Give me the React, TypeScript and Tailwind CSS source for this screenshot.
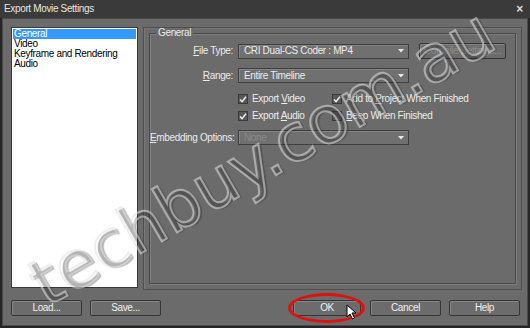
import React from 'react'

function Dropdown({ value, disabled }: { value: string; disabled?: boolean }) {
  return (
    <div className="flex h-[15px] w-[171px] items-center justify-between border border-[#3e3e3e] bg-[#707070] pl-[5px] pr-[4px] shadow-[inset_1px_1px_0_#858585]">
      <span className={disabled ? 'text-[#8a8a8a]' : 'text-[#ececec]'}>{value}</span>
      <svg width="6" height="4" viewBox="0 0 6 4">
        <path d="M0 0h6L3 3.5z" fill="#e8e8e8" />
      </svg>
    </div>
  )
}

function Check({ checked, label }: { checked: boolean; label: React.ReactNode }) {
  return (
    <div className="flex items-center gap-[4px]">
      <div className="flex h-[10px] w-[10px] items-center justify-center border border-[#3a3a3a] bg-[#585858]">
        {checked && (
          <svg width="9" height="9" viewBox="0 0 9 9">
            <path d="M1.2 4.6 3.4 7 7.8 1.4" fill="none" stroke="#f2f2f2" strokeWidth="1.6" />
          </svg>
        )}
      </div>
      <span className="text-[#ececec]">{label}</span>
    </div>
  )
}

function Button({ children, width, disabled }: { children: React.ReactNode; width: string; disabled?: boolean }) {
  return (
    <div
      className={`flex h-[16px] items-center justify-center rounded-[2px] border border-[#353535] bg-[#6c6c6c] shadow-[inset_1px_1px_0_#858585] ${width} ${
        disabled ? 'text-[#8c8c8c]' : 'text-[#f0f0f0]'
      }`}
    >
      {children}
    </div>
  )
}

export default function App() {
  return (
    <div
      className="relative flex h-[328px] w-[530px] flex-col overflow-hidden whitespace-nowrap bg-[#262626] text-[10px] leading-none tracking-[-0.35px]"
      style={{ fontFamily: '"Liberation Sans", Arial, sans-serif' }}
    >
      {/* title bar */}
      <div className="flex h-[18px] items-center justify-between bg-[#3a3a3a] pl-[4px] pr-[7px]">
        <span className="text-[10px] text-[#e6e6e6]">Export Movie Settings</span>
        <span className="text-[12px] font-bold text-[#dcdcdc]">×</span>
      </div>

      {/* body */}
      <div className="mx-[2px] mb-[2px] flex flex-1 flex-col border border-[#4a4a4a] bg-[#6b6b6b]">
        <div className="flex gap-[5px] pl-[8px] pr-[5px] pt-[8px]">
          {/* list */}
          <div className="h-[261px] w-[127px] border border-[#3a3a3a] bg-white p-[1px] text-black">
            <div className="h-[10px] bg-[#3399ff] pl-[1px] leading-[10px] text-white">General</div>
            <div className="pl-[1px] leading-[10px]">Video</div>
            <div className="pl-[1px] leading-[10px]">Keyframe and Rendering</div>
            <div className="pl-[1px] leading-[10px]">Audio</div>
          </div>

          {/* panel */}
          <div className="h-[263px] flex-1 border border-[#4e4e4e] p-[5px] pt-[5px] shadow-[inset_1px_1px_0_#787878]">
            <div className="relative h-full border border-[#4a4a4a] shadow-[1px_1px_0_#7e7e7e,inset_1px_1px_0_#7e7e7e]">
              <span className="absolute left-[6px] top-[-6px] bg-[#6b6b6b] px-[2px] text-[#ececec]">General</span>

              <div className="flex flex-col pt-[9px]">
                <div className="flex items-center">
                  <span className="w-[88px] pr-[5px] text-right text-[#ececec]">
                    <u>F</u>ile Type:
                  </span>
                  <Dropdown value="CRI Dual-CS Coder : MP4" />
                  <div className="ml-[10px]">
                    <Button width="w-[87px]" disabled>
                      Compile Settings...
                    </Button>
                  </div>
                </div>

                <div className="mt-[9px] flex items-center">
                  <span className="w-[88px] pr-[5px] text-right text-[#ececec]">
                    <u>R</u>ange:
                  </span>
                  <Dropdown value="Entire Timeline" />
                </div>

                <div className="ml-[88px] mt-[11px] flex flex-col gap-[7px]">
                  <div className="flex">
                    <div className="w-[94px]">
                      <Check checked label={<>Export <u>V</u>ideo</>} />
                    </div>
                    <Check checked label={<>Add to <u>P</u>roject When Finished</>} />
                  </div>
                  <div className="flex">
                    <div className="w-[94px]">
                      <Check checked label={<>Export <u>A</u>udio</>} />
                    </div>
                    <Check checked={false} label={<><u>B</u>eep When Finished</>} />
                  </div>
                </div>

                <div className="mt-[9px] flex items-center">
                  <span className="w-[88px] pr-[5px] text-right text-[#ececec]">
                    <u>E</u>mbedding Options:
                  </span>
                  <Dropdown value="None" disabled />
                </div>
              </div>
            </div>
          </div>
        </div>

        {/* bottom buttons */}
        <div className="mt-[10px] flex items-center pl-[8px] pr-[6px]">
          <Button width="w-[71px]">Load...</Button>
          <div className="ml-[8px]">
            <Button width="w-[71px]">Save...</Button>
          </div>
          <div className="relative ml-[132px]">
            <Button width="w-[68px]">OK</Button>
            <div className="absolute left-[-5px] top-[-7px] h-[30px] w-[77px] rounded-[50%] border-[3px] border-[#e01010]" />
            <svg className="absolute left-[53px] top-[4px]" width="11" height="16" viewBox="0 0 11 16">
              <path d="M1 1v12l3-3 2.5 5 2-1-2.5-5H10z" fill="#fff" stroke="#000" strokeWidth="1" />
            </svg>
          </div>
          <div className="ml-[9px]">
            <Button width="w-[71px]">Cancel</Button>
          </div>
          <div className="ml-[8px]">
            <Button width="w-[71px]">Help</Button>
          </div>
        </div>
      </div>

      {/* watermark */}
      <div
        className="pointer-events-none absolute left-[262px] top-[158px] -translate-x-1/2 -translate-y-1/2 -rotate-[30deg] text-[66px] tracking-normal text-transparent [-webkit-text-stroke:2px_rgba(225,225,225,0.55)] [text-shadow:2px_2px_1px_rgba(40,40,40,0.35)]"
        style={{ fontFamily: '"DejaVu Sans", sans-serif' }}
      >
        techbuy.com.au
      </div>
    </div>
  )
}
